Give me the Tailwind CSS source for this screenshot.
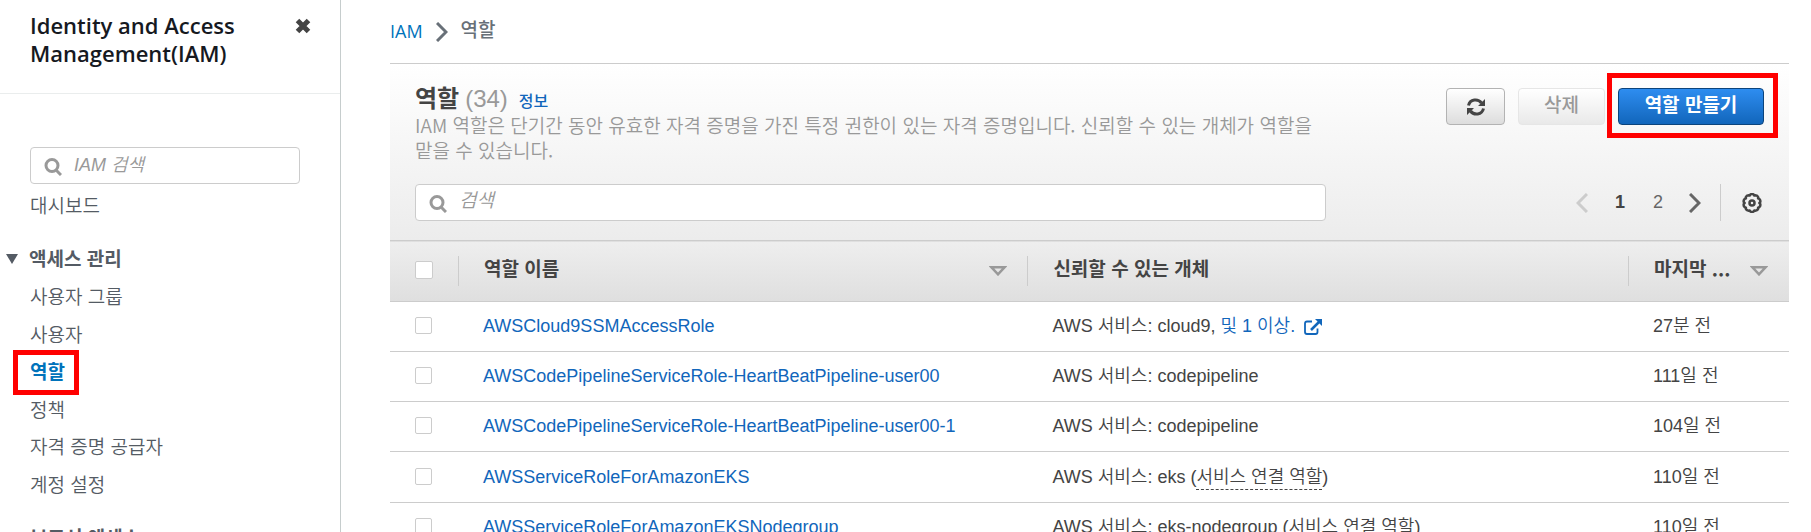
<!DOCTYPE html>
<html lang="ko">
<head>
<meta charset="utf-8">
<meta name="viewport" content="width=device-width, initial-scale=1">
<title>IAM 역할</title>
<script src="https://cdn.jsdelivr.net/npm/@tailwindcss/browser@4"></script>
</head>
<body class="flex h-screen overflow-hidden bg-white font-['Liberation_Sans','Noto_Sans_CJK_KR',sans-serif] text-[18px] text-[#444]">

<aside class="flex w-[341px] shrink-0 flex-col overflow-hidden border-r border-[#c6cdcd] font-['Noto_Sans_CJK_KR',sans-serif] text-[19px] font-[350] text-[#545b64]">
  <header class="flex h-[94px] shrink-0 items-start justify-between border-b border-[#eaeded] pt-[11px] pr-6 pl-[30px]">
    <h1 class="font-['Open_Sans',sans-serif] text-[22px] leading-7 font-semibold text-[#16191f]">Identity and Access<br>Management(IAM)</h1>
    <button type="button" aria-label="닫기" class="mt-0.5 p-1">
      <svg class="size-[18px]" viewBox="0 0 18 18"><path d="M3.500 3.500L14.500 14.500M14.500 3.500L3.500 14.500" stroke="#444" stroke-width="5" fill="none"/></svg>
    </button>
  </header>
  <div class="px-[30px] pt-[53px]">
    <label class="flex h-[37px] w-[270px] items-center gap-3 rounded-[4px] border border-[#ccc] pl-[13px]">
      <svg class="mt-0.5 size-[18px] shrink-0" viewBox="0 0 18 18" fill="none" stroke="#999"><circle cx="8" cy="7.500" r="6" stroke-width="3"/><path d="M12 12L17 17" stroke-width="3"/></svg>
      <input type="text" aria-label="IAM 검색" placeholder="IAM 검색" class="h-full w-full bg-transparent font-['Liberation_Sans','Noto_Sans_CJK_KR',sans-serif] text-[18px] font-[350] italic outline-none placeholder:text-[#999]">
    </label>
  </div>
  <nav class="flex flex-col">
    <a href="#" class="mb-4 flex h-[37px] items-center pl-[30px] mt-[3px]">대시보드</a>
    <a href="#" class="mb-px flex h-[37px] items-center gap-[11px] pl-1.5 font-bold">
      <svg class="h-2.5 w-3" viewBox="0 0 12 10"><path d="M0 0H12L6 10Z" fill="#545b64"/></svg>액세스 관리</a>
    <a href="#" class="flex h-[37px] items-center pl-[30px]">사용자 그룹</a>
    <a href="#" class="flex h-[38px] items-center pl-[30px]">사용자</a>
    <a href="#" aria-current="page" class="relative flex h-[37px] items-center pl-[30px] font-bold text-[#0073bb]">역할
      <span class="absolute -top-[3px] left-[13px] h-[45px] w-[66px] border-5 border-[#f00]"></span></a>
    <a href="#" class="flex h-[38px] items-center pl-[30px]">정책</a>
    <a href="#" class="flex h-[37px] items-center pl-[30px]">자격 증명 공급자</a>
    <a href="#" class="mb-4 flex h-[38px] items-center pl-[30px]">계정 설정</a>
    <a href="#" class="flex h-[37px] items-center pl-[30px] font-bold">보고서 액세스</a>
  </nav>
</aside>

<main class="min-w-0 flex-1 overflow-hidden pr-[22px] pl-[49px]">
  <nav aria-label="이동 경로" class="flex h-[63px] items-center gap-[13px] font-['Noto_Sans_CJK_KR',sans-serif] text-[19px]">
    <a href="#" class="text-[18px] text-[#0073bb] font-['Open_Sans',sans-serif]">IAM</a>
    <svg class="h-5 w-3" viewBox="0 0 12 20" fill="none" stroke="#687078" stroke-width="3"><path d="M1 1L10 10L1 19"/></svg>
    <span class="pb-1 font-medium text-[#687078]">역할</span>
  </nav>

  <section class="border-t border-[#ccc]">
    <header class="h-[176px] bg-linear-to-b from-white to-[#ececec] px-[25px] pt-5">
      <div class="flex justify-between">
        <div class="h-[100px] w-[67.5%]">
          <h2 class="flex h-7 items-baseline font-['Liberation_Sans','Noto_Sans_CJK_KR',sans-serif] text-[24px] leading-[30px] font-bold">역할<span class="ml-1.5 font-normal text-[#999]">(34)</span><a href="#" class="ml-[11px] text-[16px] font-medium text-[#1166bb]">정보</a></h2>
          <p class="font-['Noto_Sans_CJK_KR',sans-serif] text-[19px] leading-[25px] font-[350] text-[#999]">IAM 역할은 단기간 동안 유효한 자격 증명을 가진 특정 권한이 있는 자격 증명입니다. 신뢰할 수 있는 개체가 역할을 맡을 수 있습니다.</p>
        </div>
        <div class="mt-1 flex h-[37px] gap-[13px]">
          <button type="button" aria-label="새로 고침" class="flex w-[59px] items-center justify-center rounded-[4px] border border-[#b3b3b3] bg-linear-to-b from-white to-[#ddd]">
            <svg class="size-[18px]" viewBox="0 0 18 18" fill="none" stroke="#444" stroke-width="3"><path d="M1.500 7.500C3 1 11 .2 14.500 5M16.500 10.500C15 17 7 17.800 3.500 13"/><path d="M18 1V8H11ZM0 17V10H7Z" fill="#444" stroke="none"/></svg>
          </button>
          <button type="button" disabled class="w-[87px] rounded-[4px] border border-[#e6e6e6] bg-linear-to-b from-white to-[#e9e9e9] pb-1 font-['Noto_Sans_CJK_KR',sans-serif] text-[19px] font-medium text-[#999]">삭제</button>
          <div class="relative">
            <button type="button" class="h-full w-[146px] rounded-[4px] border border-[#0c447c] bg-linear-to-b from-[#2e8df0] to-[#1166bb] pb-1 font-['Noto_Sans_CJK_KR',sans-serif] text-[19px] font-bold text-white">역할 만들기</button>
            <span class="pointer-events-none absolute -top-[15px] -right-3.5 -bottom-[13px] -left-[11px] border-5 border-[#f00]"></span>
          </div>
        </div>
      </div>
      <div class="flex h-[37px] items-center justify-between">
        <label class="flex h-full w-[67.5%] items-center gap-3 rounded-[4px] border border-[#ccc] bg-white pl-[13px]">
          <svg class="mt-0.5 size-[18px] shrink-0" viewBox="0 0 18 18" fill="none" stroke="#999"><circle cx="8" cy="7.500" r="6" stroke-width="3"/><path d="M12 12L17 17" stroke-width="3"/></svg>
          <input type="text" aria-label="검색" placeholder="검색" class="h-full w-full bg-transparent pb-1 text-[19px] font-[350] italic outline-none placeholder:text-[#999]">
        </label>
        <div class="flex h-full items-center">
          <button type="button" aria-label="이전 페이지" disabled><svg class="h-5 w-3" viewBox="0 0 12 20" fill="none" stroke="#ccc" stroke-width="3"><path d="M11 1L2 10L11 19"/></svg></button>
          <button type="button" class="ml-[26px] w-3 font-bold">1</button>
          <button type="button" class="ml-[26px] w-3 text-[#666]">2</button>
          <button type="button" aria-label="다음 페이지" class="ml-[25px]"><svg class="h-5 w-3" viewBox="0 0 12 20" fill="none" stroke="#666" stroke-width="3"><path d="M1 1L10 10L1 19"/></svg></button>
          <button type="button" aria-label="설정" class="ml-[19px] flex h-full items-center border-l border-[#ccc] pr-0.5 pl-[21px]">
            <svg class="size-5" viewBox="0 0 20 20" fill="none" stroke="#444" stroke-linejoin="round"><path stroke-width="2.500" d="M8.300 1.600Q10 .4 11.700 1.600L12.300 2.600L13.500 2.300Q15.500 2.300 16.200 4.200L16.100 5.400L17.300 5.900Q18.800 7.300 18.200 9.200L17.400 10L18.200 10.800Q18.800 12.700 17.300 14.100L16.100 14.600L16.200 15.800Q15.500 17.700 13.500 17.700L12.300 17.400L11.700 18.400Q10 19.600 8.300 18.400L7.700 17.400L6.500 17.700Q4.500 17.700 3.800 15.800L3.900 14.600L2.700 14.100Q1.200 12.700 1.800 10.800L2.600 10L1.800 9.200Q1.200 7.300 2.700 5.900L3.900 5.400L3.800 4.200Q4.500 2.300 6.500 2.300L7.700 2.600Z"/><circle cx="10" cy="10" r="2.500" stroke-width="2.500"/></svg>
          </button>
        </div>
      </div>
    </header>

    <table class="w-full table-fixed border-collapse text-left">
      <thead>
        <tr class="h-[61px] border-y border-[#ccc] bg-linear-to-b from-[#eee] to-[#dfdfdf] font-['Noto_Sans_CJK_KR',sans-serif] text-[19px]">
          <th class="w-[68px] p-0 pb-0.5 pl-[25px]"><input type="checkbox" aria-label="모두 선택" class="block size-[18px] appearance-none rounded-[2px] border border-[#ccc] bg-white"></th>
          <th class="w-[40.7%] p-0"><div class="flex h-[30px] items-center justify-between border-l border-[#ccc] pr-5 pl-[25px]"><span class="pb-1.5">역할 이름</span><svg class="h-2.5 w-[18px]" viewBox="0 0 18 10" fill="none" stroke="#999" stroke-width="2.500"><path d="M2.500 1.300H15.500L9 8.300Z"/></svg></div></th>
          <th class="p-0"><div class="flex h-[30px] items-center border-l border-[#ccc] pl-[25px]"><span class="pb-1.5">신뢰할 수 있는 개체</span></div></th>
          <th class="w-[161px] p-0"><div class="flex h-[30px] items-center justify-between border-l border-[#ccc] pr-[21px] pl-[25px]"><span class="pb-1.5">마지막 ...</span><svg class="h-2.5 w-[18px]" viewBox="0 0 18 10" fill="none" stroke="#999" stroke-width="2.500"><path d="M2.500 1.300H15.500L9 8.300Z"/></svg></div></th>
        </tr>
      </thead>
      <tbody class="font-[350] whitespace-nowrap">
        <tr class="h-[50px] border-b border-[#ccc]">
          <td class="p-0 pb-0.5 pl-[25px]"><input type="checkbox" aria-label="AWSCloud9SSMAccessRole 선택" class="block size-[17px] appearance-none rounded-[2px] border border-[#ccc] bg-white"></td>
          <td class="p-0 pl-[25px]"><a href="#" class="text-[#1166bb]">AWSCloud9SSMAccessRole</a></td>
          <td class="p-0 pl-[25px]">AWS 서비스: cloud9, <a href="#" class="text-[#1166bb]">및 1 이상. <svg class="ml-1 inline h-4 w-[18px]" viewBox="0 0 18 16" fill="none" stroke="#1166bb"><path d="M8 2.500H3Q1 2.500 1 4.500V13Q1 15 3 15H11.500Q13.500 15 13.500 13V9.500" stroke-width="1.800"/><path d="M7 11L15 3" stroke-width="2.500"/><path d="M11 0H18V7Z" fill="#1166bb" stroke="none"/></svg></a></td>
          <td class="p-0 pl-[25px]">27분 전</td>
        </tr>
        <tr class="h-[50px] border-b border-[#ccc]">
          <td class="p-0 pb-0.5 pl-[25px]"><input type="checkbox" aria-label="AWSCodePipelineServiceRole-HeartBeatPipeline-user00 선택" class="block size-[17px] appearance-none rounded-[2px] border border-[#ccc] bg-white"></td>
          <td class="p-0 pl-[25px]"><a href="#" class="text-[#1166bb]">AWSCodePipelineServiceRole-HeartBeatPipeline-user00</a></td>
          <td class="p-0 pl-[25px]">AWS 서비스: codepipeline</td>
          <td class="p-0 pl-[25px]">111일 전</td>
        </tr>
        <tr class="h-[50px] border-b border-[#ccc]">
          <td class="p-0 pb-0.5 pl-[25px]"><input type="checkbox" aria-label="AWSCodePipelineServiceRole-HeartBeatPipeline-user00-1 선택" class="block size-[17px] appearance-none rounded-[2px] border border-[#ccc] bg-white"></td>
          <td class="p-0 pl-[25px]"><a href="#" class="text-[#1166bb]">AWSCodePipelineServiceRole-HeartBeatPipeline-user00-1</a></td>
          <td class="p-0 pl-[25px]">AWS 서비스: codepipeline</td>
          <td class="p-0 pl-[25px]">104일 전</td>
        </tr>
        <tr class="h-[51px] border-b border-[#ccc]">
          <td class="p-0 pb-0.5 pl-[25px]"><input type="checkbox" aria-label="AWSServiceRoleForAmazonEKS 선택" class="block size-[17px] appearance-none rounded-[2px] border border-[#ccc] bg-white"></td>
          <td class="p-0 pl-[25px]"><a href="#" class="text-[#1166bb]">AWSServiceRoleForAmazonEKS</a></td>
          <td class="p-0 pl-[25px]">AWS 서비스: eks (<span class="border-b border-dashed border-[#444] pb-0.5">서비스 연결 역할</span>)</td>
          <td class="p-0 pl-[25px]">110일 전</td>
        </tr>
        <tr class="h-[50px] border-b border-[#ccc]">
          <td class="p-0 pb-0.5 pl-[25px]"><input type="checkbox" aria-label="AWSServiceRoleForAmazonEKSNodegroup 선택" class="block size-[17px] appearance-none rounded-[2px] border border-[#ccc] bg-white"></td>
          <td class="p-0 pl-[25px]"><a href="#" class="text-[#1166bb]">AWSServiceRoleForAmazonEKSNodegroup</a></td>
          <td class="p-0 pl-[25px]">AWS 서비스: eks-nodegroup (<span class="border-b border-dashed border-[#444] pb-0.5">서비스 연결 역할</span>)</td>
          <td class="p-0 pl-[25px]">110일 전</td>
        </tr>
      </tbody>
    </table>
  </section>
</main>
</body>
</html>
